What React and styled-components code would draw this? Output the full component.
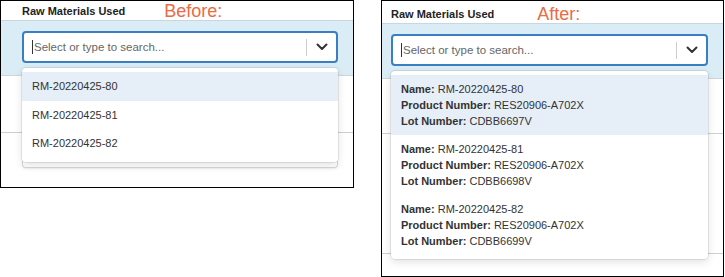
import styled, { createGlobalStyle } from "styled-components";

const GlobalStyle = createGlobalStyle`
  html, body { margin: 0; padding: 0; background: #fff; }
  body { font-family: "Liberation Sans", Arial, sans-serif; color: #333; }
`;

const Page = styled.div`
  display: flex;
  align-items: flex-start;
  width: 725px;
  height: 277px;
`;

const Frame = styled.div`
  position: relative;
  box-sizing: border-box;
  width: ${(p) => p.$w}px;
  height: ${(p) => p.$h}px;
  margin-left: ${(p) => p.$ml || 0}px;
  border: 1.5px solid #000;
  padding-top: ${(p) => p.$pt}px;
  overflow: hidden;
  background: #fff;
`;

const Header = styled.div`
  display: flex;
  align-items: flex-end;
  height: 19px;
  padding-left: ${(p) => p.$inset}px;
`;

const Title = styled.div`
  font-size: 11px;
  font-weight: bold;
  color: #222;
  padding-bottom: 3px;
`;

const Note = styled.div`
  margin-left: ${(p) => p.$ml}px;
  font-size: 18px;
  color: #ec6a45;
  line-height: 18px;
`;

const Band = styled.div`
  background: #daecf5;
  border-top: 1px solid #c9d6dd;
  border-bottom: 1px solid #cfd6da;
  padding: 10px 15px 12px ${(p) => p.$inset}px;
`;

const Select = styled.div`
  display: flex;
  align-items: center;
  box-sizing: border-box;
  height: 32px;
  border: 2px solid #3a7fc1;
  border-radius: 4px;
  background: #fff;
  padding-left: 8px;
`;

const Placeholder = styled.div`
  flex: 1;
  font-size: 11.5px;
  color: #666;
  border-left: 1px solid #333;
  padding-left: 1px;
  line-height: 14px;
`;

const Separator = styled.span`
  width: 1px;
  height: 17px;
  background: #ccc;
`;

const Chevron = styled.div`
  width: 29px;
  display: flex;
  justify-content: center;
  align-items: center;
`;

const Body = styled.div`
  position: relative;
  display: flow-root;
  height: ${(p) => p.$h}px;
`;

const Rule = styled.div`
  height: 1px;
  background: #cfcfcf;
  margin-top: ${(p) => p.$mt}px;
`;

const Card = styled.div`
  margin: ${(p) => p.$mt}px 15px 0 ${(p) => p.$inset}px;
  height: 6px;
  border: 1px solid #d6d6d6;
  border-top: none;
  border-radius: 0 0 4px 4px;
  box-shadow: 0 1px 2px rgba(0, 0, 0, 0.08);
`;

const Menu = styled.div`
  position: absolute;
  left: ${(p) => p.$inset}px;
  right: 15px;
  top: ${(p) => p.$top}px;
  background: #fff;
  border-radius: 4px;
  box-shadow: 0 0 0 1px rgba(0, 0, 0, 0.08), 0 3px 8px rgba(0, 0, 0, 0.12);
  padding: 4px 0;
`;

const Option = styled.div`
  padding: ${(p) => (p.$rich ? "6px 10px" : "8px 10px")};
  background: ${(p) => (p.$active ? "#e6eef7" : "#fff")};
  font-size: 11px;
  line-height: ${(p) => (p.$rich ? "16px" : "12.5px")};
  color: #333;
`;

const Label = styled.b`
  font-weight: bold;
  color: #333;
`;

const ChevronIcon = () => (
  <svg width="12" height="8" viewBox="0 0 12 8">
    <path d="M1.5 1.5 L6 6 L10.5 1.5" fill="none" stroke="#333" strokeWidth="2" strokeLinecap="round" strokeLinejoin="round" />
  </svg>
);

const SelectBox = () => (
  <Select>
    <Placeholder>Select or type to search...</Placeholder>
    <Separator />
    <Chevron>
      <ChevronIcon />
    </Chevron>
  </Select>
);

const materials = [
  { name: "RM-20220425-80", product: "RES20906-A702X", lot: "CDBB6697V" },
  { name: "RM-20220425-81", product: "RES20906-A702X", lot: "CDBB6698V" },
  { name: "RM-20220425-82", product: "RES20906-A702X", lot: "CDBB6699V" },
];

export default function App() {
  return (
    <Page>
      <GlobalStyle />
      <Frame $w={354} $h={188} $pt={0}>
        <Header $inset={21}>
          <Title>Raw Materials Used</Title>
          <Note $ml={39}>Before:</Note>
        </Header>
        <Band $inset={21}>
          <SelectBox />
        </Band>
        <Body $h={120}>
          <Rule $mt={56} />
          <Card $inset={21} $mt={28} />
          <Menu $inset={21} $top={-8}>
            {materials.map((m, i) => (
              <Option key={m.name} $active={i === 0}>
                {m.name}
              </Option>
            ))}
          </Menu>
        </Body>
      </Frame>
      <Frame $w={343} $h={277} $ml={27} $pt={3}>
        <Header $inset={9}>
          <Title>Raw Materials Used</Title>
          <Note $ml={43}>After:</Note>
        </Header>
        <Band $inset={9}>
          <SelectBox />
        </Band>
        <Body $h={200}>
          <Rule $mt={54} />
          <Rule $mt={119} />
          <Menu $inset={9} $top={-8}>
            {materials.map((m, i) => (
              <Option key={m.name} $rich $active={i === 0}>
                <div><Label>Name:</Label> {m.name}</div>
                <div><Label>Product Number:</Label> {m.product}</div>
                <div><Label>Lot Number:</Label> {m.lot}</div>
              </Option>
            ))}
          </Menu>
        </Body>
      </Frame>
    </Page>
  );
}
